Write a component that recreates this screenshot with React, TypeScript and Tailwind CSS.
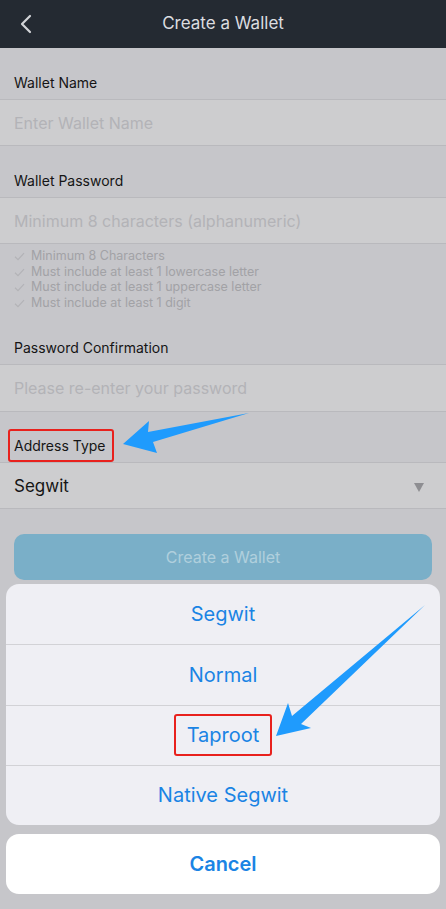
import React from 'react';

const font = { fontFamily: 'Inter, "Noto Sans", sans-serif' };

const hints = [
  'Minimum 8 Characters',
  'Must include at least 1 lowercase letter',
  'Must include at least 1 uppercase letter',
  'Must include at least 1 digit',
];

const options = ['Segwit', 'Normal', 'Taproot', 'Native Segwit'];

const Label: React.FC<{ text: string; h: string }> = ({ text, h }) => (
  <div className={`${h} flex items-end px-[14px] pb-[6px] border-b border-[#b9b9bd]`}>
    <span className="text-[14px] leading-[20px] text-[#151515]">{text}</span>
  </div>
);

const Field: React.FC<{ placeholder: string; h?: string }> = ({ placeholder, h = 'h-[46px]' }) => (
  <div className={`${h} flex items-center px-[14px] bg-[#cdcdcf] border-b border-[#b9b9bd]`}>
    <span className="text-[16px] text-[#b3b3b7]">{placeholder}</span>
  </div>
);

const Check = () => (
  <svg width="11" height="9" viewBox="0 0 11 9" className="shrink-0">
    <path d="M1 4.8 L4 7.6 L10 1.2" fill="none" stroke="#b3b3b7" strokeWidth="1.2" />
  </svg>
);

export default function App() {
  return (
    <div className="relative w-[446px] h-[909px] overflow-hidden bg-[#c6c6ca]" style={font}>
      <header className="h-[48px] bg-[#242a32] flex items-center relative">
        <div className="w-[48px] flex justify-center pl-[4px]">
          <svg width="12" height="20" viewBox="0 0 12 20">
            <path d="M10 2 L2 10 L10 18" fill="none" stroke="#d3d5d8" strokeWidth="2.2" strokeLinecap="round" strokeLinejoin="round" />
          </svg>
        </div>
        <h1 className="flex-1 text-center pr-[48px] text-[17px] text-[#dcdde0]">Create a Wallet</h1>
      </header>

      <Label text="Wallet Name" h="h-[52px]" />
      <Field placeholder="Enter Wallet Name" />
      <Label text="Wallet Password" h="h-[52px]" />
      <Field placeholder="Minimum 8 characters (alphanumeric)" />

      <div className="h-[67px] pt-[5px] px-[14px] flex flex-col">
        {hints.map(h => (
          <div key={h} className="flex items-center gap-[6px] h-[15.5px]">
            <Check />
            <span className="text-[12.5px] text-[#a2a2a6]">{h}</span>
          </div>
        ))}
      </div>

      <Label text="Password Confirmation" h="h-[54px]" />
      <Field placeholder="Please re-enter your password" h="h-[47px]" />

      <div className="h-[51px] flex items-end px-[8px] border-b border-[#b9b9bd]">
        <span className="border-2 border-[#e8211d] rounded-[3px] pl-[4px] pr-[6px] pt-[5px] pb-[4px] text-[14px] leading-[20px] text-[#151515]">
          Address Type
        </span>
      </div>
      <div className="h-[46px] flex items-center justify-between px-[14px] pr-[22px] pt-[3px] bg-[#cdcdcf] border-b border-[#b9b9bd]">
        <span className="text-[17px] text-[#151515]">Segwit</span>
        <svg width="10" height="9" viewBox="0 0 10 9">
          <path d="M0 0 H10 L5 9 Z" fill="#8e8e92" />
        </svg>
      </div>

      <div className="px-[14px] pt-[25px]">
        <button className="w-full h-[46px] rounded-[10px] bg-[#7aafc8] text-[16px] text-[#b0cfdd]">Create a Wallet</button>
      </div>

      {/* action sheet */}
      <div className="absolute left-[6px] right-[6px] bottom-[15px] flex flex-col gap-[9px]">
        <div className="rounded-[13px] bg-[#efeff4] overflow-hidden">
          {options.map((o, i) => (
            <div
              key={o}
              className={`h-[60.25px] flex items-center justify-center ${i > 0 ? 'border-t border-[#d2d2d6]' : ''}`}
            >
              {o === 'Taproot' ? (
                <span className="border-2 border-[#e8211d] rounded-[3px] px-[11px] py-[5px] text-[20px] leading-[28px] text-[#1a84e4]">
                  {o}
                </span>
              ) : (
                <span className="text-[20px] text-[#1a84e4]">{o}</span>
              )}
            </div>
          ))}
        </div>
        <button className="h-[60px] rounded-[13px] bg-white text-[20px] font-semibold text-[#1a84e4]">Cancel</button>
      </div>

      {/* annotation arrows */}
      <svg className="absolute inset-0 pointer-events-none" width="446" height="909" viewBox="0 0 446 909">
        <polygon points="249,413 148,432 149,421 123,444 157,453 153,442" fill="#1f9bfd" />
        <polygon points="425,605 301,724 311,728 276,736 288,703 292,716" fill="#1f9bfd" />
      </svg>
    </div>
  );
}
